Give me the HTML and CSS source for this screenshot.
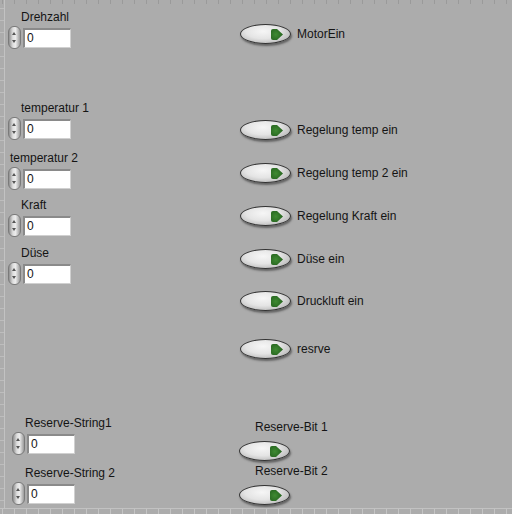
FILE: index.html
```html
<!DOCTYPE html>
<html>
<head>
<meta charset="utf-8">
<link rel="stylesheet" href="styles.css">
</head>
<body>
<div class="panel">
  <div class="ruler-top"></div>
  <div class="ruler-left"></div>
  <div class="ruler-bottom"></div>

  <div class="num" style="left:8px;top:10px"><div class="lbl" style="margin-left:13px">Drehzahl</div><div class="row"><div class="spin"><span class="up"></span><span class="dn"></span></div><div class="box">0</div></div></div>
  <div class="num" style="left:8px;top:101px"><div class="lbl" style="margin-left:13px">temperatur 1</div><div class="row"><div class="spin"><span class="up"></span><span class="dn"></span></div><div class="box">0</div></div></div>
  <div class="num" style="left:8px;top:151px"><div class="lbl" style="margin-left:2px">temperatur 2</div><div class="row"><div class="spin"><span class="up"></span><span class="dn"></span></div><div class="box">0</div></div></div>
  <div class="num" style="left:8px;top:198px"><div class="lbl" style="margin-left:13px">Kraft</div><div class="row"><div class="spin"><span class="up"></span><span class="dn"></span></div><div class="box">0</div></div></div>
  <div class="num" style="left:8px;top:246px"><div class="lbl" style="margin-left:13px">Düse</div><div class="row"><div class="spin"><span class="up"></span><span class="dn"></span></div><div class="box">0</div></div></div>
  <div class="num" style="left:12px;top:416px"><div class="lbl" style="margin-left:13px">Reserve-String1</div><div class="row"><div class="spin"><span class="up"></span><span class="dn"></span></div><div class="box">0</div></div></div>
  <div class="num" style="left:12px;top:466px"><div class="lbl" style="margin-left:13px">Reserve-String 2</div><div class="row"><div class="spin"><span class="up"></span><span class="dn"></span></div><div class="box">0</div></div></div>

  <div class="sw" style="top:24px"><div class="btn"><span class="led"></span></div><span class="swl">MotorEin</span></div>
  <div class="sw" style="top:120px"><div class="btn"><span class="led"></span></div><span class="swl">Regelung temp ein</span></div>
  <div class="sw" style="top:163px"><div class="btn"><span class="led"></span></div><span class="swl">Regelung temp 2 ein</span></div>
  <div class="sw" style="top:206px"><div class="btn"><span class="led"></span></div><span class="swl">Regelung Kraft ein</span></div>
  <div class="sw" style="top:249px"><div class="btn"><span class="led"></span></div><span class="swl">Düse ein</span></div>
  <div class="sw" style="top:291px"><div class="btn"><span class="led"></span></div><span class="swl">Druckluft ein</span></div>
  <div class="sw" style="top:339px"><div class="btn"><span class="led"></span></div><span class="swl">resrve</span></div>

  <div class="bit" style="top:420px"><div class="lbl" style="margin-left:16px">Reserve-Bit 1</div><div class="btn"><span class="led"></span></div></div>
  <div class="bit" style="top:464px"><div class="lbl" style="margin-left:16px">Reserve-Bit 2</div><div class="btn"><span class="led"></span></div></div>
</div>
</body>
</html>
```
FILE: styles.css
```css
html, body {
  margin: 0;
  padding: 0;
  background: #acacac;
}
.panel {
  position: relative;
  width: 512px;
  height: 514px;
  overflow: hidden;
  background: #acacac;
  font-family: "Liberation Sans", Arial, sans-serif;
  font-size: 12px;
  color: #141414;
}
.ruler-top {
  position: absolute;
  left: 0; top: 0;
  width: 512px; height: 4px;
  background: repeating-linear-gradient(to right, transparent 0 2px, #9a9a9a 2px 3px, transparent 3px 12px);
}
.ruler-left {
  position: absolute;
  left: 0; top: 0;
  width: 4px; height: 508px;
  border-right: 1px solid #c2c2c2;
  background: repeating-linear-gradient(to bottom, transparent 0 8px, #bdbdbd 8px 9px, transparent 9px 12px);
}
.ruler-bottom {
  position: absolute;
  left: 0; top: 508px;
  width: 512px; height: 6px;
  border-top: 1px solid #c2c2c2;
  background: repeating-linear-gradient(to right, transparent 0 2px, #c4c4c4 2px 3px, transparent 3px 12px);
}
.num {
  position: absolute;
  display: flex;
  flex-direction: column;
  gap: 2px;
}
.lbl {
  line-height: 14px;
  white-space: nowrap;
}
.row {
  display: flex;
  align-items: center;
  gap: 2px;
}
.spin {
  position: relative;
  width: 13px;
  height: 23px;
  border-radius: 6px;
  background: linear-gradient(to right, #8e8e8e, #dedede 35%, #ececec 60%, #9a9a9a);
  border: 1px solid #7a7a7a;
  box-sizing: border-box;
}
.spin .up, .spin .dn {
  position: absolute;
  left: 3px;
  width: 0; height: 0;
  border-left: 2.5px solid transparent;
  border-right: 2.5px solid transparent;
}
.spin .up { top: 5px; border-bottom: 3px solid #555; }
.spin .dn { bottom: 5px; border-top: 3px solid #555; }
.box {
  width: 48px;
  height: 20px;
  box-sizing: border-box;
  background: #fff;
  border-top: 2px solid #8a8a8a;
  border-left: 2px solid #8a8a8a;
  border-right: 1px solid #d0d0d0;
  border-bottom: 1px solid #d0d0d0;
  padding-left: 2px;
  line-height: 17px;
  font-size: 12px;
}
.sw {
  position: absolute;
  left: 240px;
  display: flex;
  align-items: center;
  gap: 6px;
}
.bit {
  position: absolute;
  left: 239px;
  display: flex;
  flex-direction: column;
  gap: 7px;
}
.btn {
  position: relative;
  width: 51px;
  height: 20px;
  box-sizing: border-box;
  border-radius: 50%;
  border: 1px solid #333;
  background: radial-gradient(ellipse at 45% 35%, #f6f6f6 0%, #e4e4e4 45%, #bababa 80%, #8a8a8a 100%);
  box-shadow: 1px 2px 2px rgba(40,40,40,0.55);
}
.led {
  position: absolute;
  right: 7px;
  top: 4px;
  width: 12px;
  height: 11px;
  background: radial-gradient(circle at 40% 50%, #3f8a32, #1f5a1a);
  clip-path: polygon(0 0, 50% 0, 100% 50%, 50% 100%, 0 100%);
  border-radius: 2px;
}
.swl {
  white-space: nowrap;
  line-height: 14px;
}
```
